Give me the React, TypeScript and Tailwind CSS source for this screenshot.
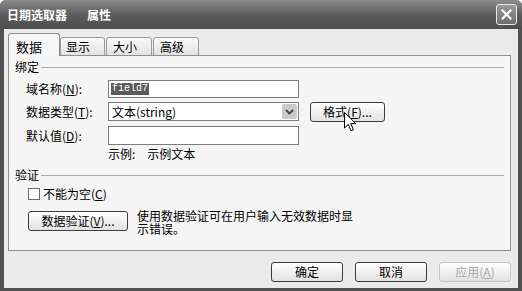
import React from 'react';

const FONT = { fontFamily: '"Noto Sans CJK SC", "Liberation Sans", sans-serif' };

function Btn({ children, w, disabled }: { children: React.ReactNode; w: string; disabled?: boolean }) {
  return (
    <div
      className={`${w} h-[20px] flex items-center justify-center rounded-[3px] border text-[12px] leading-none bg-gradient-to-b from-white to-[#e2e2e2] ${
        disabled ? 'border-[#c4c4c4] text-[#a9a9a9]' : 'border-[#3d3d3d] text-black'
      }`}
    >
      {children}
    </div>
  );
}

function Group({ title }: { title: string }) {
  return (
    <div className="flex items-center h-[16px] pl-[6px] pr-[6px]">
      <span className="text-[12px] leading-none">{title}</span>
      <div className="flex-1 h-px bg-[#acacac] ml-[2px]" />
    </div>
  );
}

function Label({ children }: { children: React.ReactNode }) {
  return <div className="w-[82px] ml-[17px] text-[12px] leading-none">{children}</div>;
}

export default function App() {
  return (
    <div className="w-[522px] h-[291px] bg-white" style={FONT}>
      <div className="w-[522px] h-[291px] flex flex-col bg-[#505050] rounded-t-[6px] overflow-hidden">
        {/* barra de título */}
        <div className="h-[29px] flex items-center justify-between pl-[7px] pr-[5px] bg-gradient-to-b from-[#8c8c8c] via-[#5c5c5c] to-[#4e4e4e]">
          <div className="text-white font-bold text-[12px] leading-none flex gap-[20px]">
            <span>日期选取器</span>
            <span>属性</span>
          </div>
          <div className="w-[21px] h-[21px] rounded-[3px] border border-[#e8e8e8] bg-gradient-to-b from-[#9a9a9a] to-[#6e6e6e] flex items-center justify-center">
            <svg width="11" height="11" viewBox="0 0 11 11">
              <path d="M1.5 1.5 L9.5 9.5 M9.5 1.5 L1.5 9.5" stroke="white" strokeWidth="2.2" strokeLinecap="square" />
            </svg>
          </div>
        </div>

        {/* corpo */}
        <div className="flex-1 mx-[4px] mb-[3px] bg-[#ebebeb] flex flex-col pl-[4px] pr-[7px] pt-[4px]">
          {/* abas */}
          <div className="flex items-end h-[23px]">
            <div className="relative z-10 w-[52px] h-[23px] border border-b-0 border-[#8f8f8f] rounded-t-[3px] bg-[#f6f6f6] pl-[7px] pt-[6px] text-[13px] leading-none">
              数据
            </div>
            <div className="w-[45px] h-[19px] border border-[#9a9a9a] rounded-t-[3px] bg-gradient-to-b from-[#fafafa] to-[#e2e2e2] pl-[5px] pt-[3px] text-[12px] leading-none">
              显示
            </div>
            <div className="ml-[1px] w-[46px] h-[19px] border border-[#9a9a9a] rounded-t-[3px] bg-gradient-to-b from-[#fafafa] to-[#e2e2e2] pl-[6px] pt-[3px] text-[12px] leading-none">
              大小
            </div>
            <div className="ml-[1px] w-[46px] h-[19px] border border-[#9a9a9a] rounded-t-[3px] bg-gradient-to-b from-[#fafafa] to-[#e2e2e2] pl-[6px] pt-[3px] text-[12px] leading-none">
              高级
            </div>
          </div>

          {/* painel */}
          <div className="-mt-[1px] h-[196px] border border-[#8f8f8f] bg-[#f5f5f5] flex flex-col">
            <div className="mt-[3px]">
              <Group title="绑定" />
            </div>

            <div className="mt-[5px] flex items-center h-[18px]">
              <Label>
                域名称(<u>N</u>):
              </Label>
              <div className="w-[191px] h-[18px] border border-[#7c7c7c] bg-white flex items-center pl-[2px]">
                <span className="bg-[#5a5a5a] text-white text-[10px] leading-none px-[1px] py-[1px]" style={{ fontFamily: '"Liberation Mono", monospace' }}>
                  field7
                </span>
              </div>
            </div>

            <div className="mt-[4px] flex items-center h-[19px]">
              <Label>
                数据类型(<u>T</u>):
              </Label>
              <div className="w-[191px] h-[19px] border border-[#7c7c7c] bg-white flex items-center justify-between pl-[3px] pr-[1px]">
                <span className="text-[12px] leading-none">文本(string)</span>
                <div className="w-[15px] h-[15px] bg-[#c9c9c9] rounded-[2px] flex items-center justify-center">
                  <svg width="9" height="6" viewBox="0 0 9 6">
                    <path d="M1 1 L4.5 4.5 L8 1" fill="none" stroke="#444" strokeWidth="1.8" />
                  </svg>
                </div>
              </div>
              <div className="relative ml-[11px]">
                <Btn w="w-[75px]">
                  格式(<u>F</u>)...
                </Btn>
                <svg className="absolute left-[34px] top-[10px]" width="13" height="20" viewBox="0 0 13 20">
                  <path d="M0.5 0.5 L0.5 16 L4.3 12.4 L7 18.8 L9.4 17.8 L6.8 11.6 L11.8 11.6 Z" fill="white" stroke="black" strokeWidth="1" />
                </svg>
              </div>
            </div>

            <div className="mt-[5px] flex items-center h-[19px]">
              <Label>
                默认值(<u>D</u>):
              </Label>
              <div className="w-[191px] h-[19px] border border-[#7c7c7c] bg-white" />
            </div>

            <div className="mt-[2px] flex items-center h-[14px] pl-[99px] text-[12px] leading-none">
              <span>示例:</span>
              <span className="ml-[12px]">示例文本</span>
            </div>

            <div className="mt-[6px]">
              <Group title="验证" />
            </div>

            <div className="mt-[4px] flex items-center h-[14px] pl-[19px]">
              <div className="w-[12px] h-[12px] border border-[#6a6a6a] bg-white" />
              <span className="ml-[3px] text-[12px] leading-none">
                不能为空(<u>C</u>)
              </span>
            </div>

            <div className="mt-[10px] flex items-start pl-[19px]">
              <Btn w="w-[100px]">
                数据验证(<u>V</u>)...
              </Btn>
              <div className="ml-[9px] -mt-[2px] text-[12px] leading-[13px] w-[220px]">
                使用数据验证可在用户输入无效数据时显示错误。
              </div>
            </div>
          </div>

          {/* botões */}
          <div className="mt-[11px] flex justify-end gap-[12px]">
            <Btn w="w-[72px]">确定</Btn>
            <Btn w="w-[72px]">取消</Btn>
            <Btn w="w-[72px]" disabled>
              应用(<u>A</u>)
            </Btn>
          </div>
        </div>
      </div>
    </div>
  );
}
